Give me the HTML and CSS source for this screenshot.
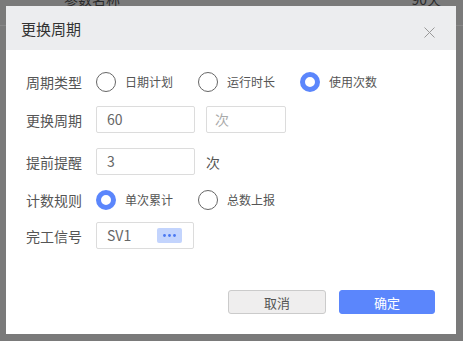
FILE: index.html
```html
<!DOCTYPE html>
<html lang="zh-CN">
<head>
  <meta charset="UTF-8" />
  <meta name="viewport" content="width=device-width, initial-scale=1.0" />
  <title>更换周期</title>
  <link rel="stylesheet" href="styles.css">
</head>
<body>
  <div class="page">
    <div class="page-row">
      <span class="page-name">参数名称</span>
      <span class="page-value">90天</span>
    </div>
  </div>

  <div class="dialog">
    <div class="dialog-head">
      <h2>更换周期</h2>
      <span class="close">
        <svg width="11" height="11" viewBox="0 0 11 11"><path d="M0.5 0.5 L10.5 10.5 M10.5 0.5 L0.5 10.5" stroke="#999" stroke-width="1" fill="none"/></svg>
      </span>
    </div>

    <div class="dialog-body">
      <div class="row">
        <label class="row-label">周期类型</label>
        <div class="radios">
          <span class="radio"><i></i>日期计划</span>
          <span class="radio"><i></i>运行时长</span>
          <span class="radio checked"><i></i>使用次数</span>
        </div>
      </div>
      <div class="row">
        <label class="row-label">更换周期</label>
        <div class="input">60</div>
        <div class="input input-sm placeholder">次</div>
      </div>
      <div class="row row-wide">
        <label class="row-label">提前提醒</label>
        <div class="input">3</div>
        <span class="unit">次</span>
      </div>
      <div class="row">
        <label class="row-label">计数规则</label>
        <div class="radios">
          <span class="radio checked"><i></i>单次累计</span>
          <span class="radio"><i></i>总数上报</span>
        </div>
      </div>
      <div class="row row-tight">
        <label class="row-label">完工信号</label>
        <div class="input input-pick">SV1
          <span class="more">
            <svg width="13" height="3" viewBox="0 0 13 3"><circle cx="1.5" cy="1.5" r="1.4" fill="#4a78f2"/><circle cx="6.5" cy="1.5" r="1.4" fill="#4a78f2"/><circle cx="11.5" cy="1.5" r="1.4" fill="#4a78f2"/></svg>
          </span>
        </div>
      </div>
    </div>

    <div class="dialog-foot">
      <button class="btn">取消</button>
      <button class="btn btn-primary">确定</button>
    </div>
  </div>
</body>
</html>
```

FILE: styles.css
```css
* {
  margin: 0;
  padding: 0;
  box-sizing: border-box;
  font-family: "Noto Sans CJK SC", "Noto Sans", sans-serif;
}

body {
  width: 463px;
  height: 341px;
  overflow: hidden;
  background: #7a7a7a;
  position: relative;
}

/* page behind the mask */
.page-row {
  height: 27px;
  margin-top: -1px;
  border-bottom: 1px solid #888;
  display: flex;
  justify-content: space-between;
  padding: 0 22px 0 64px;
  font-size: 14px;
  line-height: 14px;
  color: #2a2a2a;
}

.page-row span {
  margin-top: -7px;
}

/* dialog */
.dialog {
  position: absolute;
  left: 6px;
  top: 6px;
  width: 450px;
  height: 328px;
  background: #fff;
  display: flex;
  flex-direction: column;
}

.dialog-head {
  height: 44px;
  background: #ecedef;
  display: flex;
  align-items: center;
  justify-content: space-between;
  padding: 0 21px 0 15px;
}

.dialog-head h2 {
  font-size: 15px;
  font-weight: 400;
  color: #333;
}

.close {
  display: flex;
  margin-top: 9px;
}

.dialog-body {
  padding: 18px 20px 0;
}

.row {
  height: 27px;
  display: flex;
  align-items: center;
  gap: 11px;
}

.row + .row {
  margin-top: 11px;
}

.row + .row-wide {
  margin-top: 15px;
}

.row + .row-tight {
  margin-top: 9px;
}

.row-label {
  width: 59px;
  font-size: 14px;
  color: #555;
}

.radios {
  display: flex;
  gap: 25px;
}

.radio {
  display: flex;
  align-items: center;
  gap: 9px;
  font-size: 12px;
  color: #555;
}

.radio i {
  width: 20px;
  height: 20px;
  border: 1px solid #666;
  border-radius: 50%;
  background: #fff;
}

.radio.checked i {
  border: 5px solid #5b86fc;
}

.input {
  width: 99px;
  height: 27px;
  border: 1px solid #dcdcdc;
  border-radius: 2px;
  padding-left: 10px;
  font-size: 14px;
  line-height: 25px;
  color: #666;
  display: flex;
  align-items: center;
}

.input-sm {
  width: 80px;
  padding-left: 8px;
}

.placeholder {
  color: #aaa;
}

.unit {
  font-size: 14px;
  color: #555;
}

.input-pick {
  width: 98px;
  justify-content: space-between;
  padding-right: 11px;
}

.more {
  width: 25px;
  height: 15px;
  background: #c3d4fd;
  border-radius: 2px;
  display: flex;
  align-items: center;
  justify-content: center;
}

.dialog-foot {
  margin-top: auto;
  display: flex;
  justify-content: flex-end;
  gap: 13px;
  padding: 0 21px 20px;
}

.btn {
  width: 98px;
  height: 24px;
  border: 1px solid #cbcbcb;
  border-radius: 3px;
  background: #efeeee;
  font-size: 13px;
  color: #555;
}

.btn-primary {
  width: 96px;
  border-color: #5b86fc;
  background: #5b86fc;
  color: #fff;
}
```
